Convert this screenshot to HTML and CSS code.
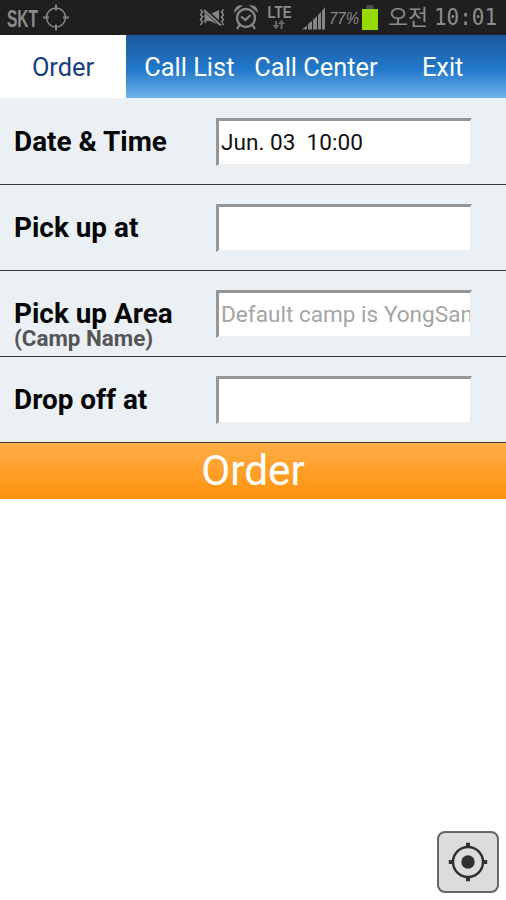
FILE: index.html
```
<!DOCTYPE html>
<html lang="en">
<head>
<meta charset="utf-8">
<meta name="viewport" content="width=device-width">
<title>Order</title>
<link rel="stylesheet" href="styles.css">
</head>
<body>
<header class="status">
<svg class="status-art" width="506" height="35" viewBox="0 0 506 35" fill="none" stroke="#858585">
<text class="carrier" x="7" y="27" textLength="31" lengthAdjust="spacingAndGlyphs">SKT</text>
<circle cx="56" cy="17.5" r="9.500" stroke-width="1.600"/>
<path d="M56 4.500v6M56 24.500v6M43 17.500h6M63 17.500h6" stroke-width="2"/>
<path d="M200.500 9.500l2 2.500-2 2.500 2 2.500-2 2.500 2 2.500-2 3M204.500 12l1.500 2-1.500 2 1.500 2-1.500 2 1.500 3M223.500 9.500l-2 2.500 2 2.500-2 2.500 2 2.500-2 2.500 2 3" stroke-width="1.600"/>
<path d="M206 14h4l9-4v15l-9-4h-4z" fill="#858585" stroke="none"/>
<path d="M205 10l16 15" stroke="#1f1f1f" stroke-width="4"/>
<path d="M204 10l17 15.500" stroke-width="2"/>
<circle cx="246" cy="18" r="9" stroke-width="2.4"/>
<path d="M241 16.500l4.500 3.500 5-5M239.500 25l-2.500 4M252.500 25l2.500 4" stroke-width="2.200"/>
<path d="M235 11q1-5 6-5zM257 11q-1-5-6-5z" fill="#858585" stroke-width="1.500"/>
<text class="lte" x="267.500" y="18" textLength="24" lengthAdjust="spacingAndGlyphs">LTE</text>
<path d="M276 21v7M281.500 29v-7" stroke="#666" stroke-width="2"/>
<path d="M272.500 25h7l-3.500 4.500zM278 24h7l-3.500-4.500z" fill="#666" stroke="none"/>
<path d="M302 29.500l5-4v4zM308 24l4-3v8.500h-4zM313 20l4-4v13.500h-4zM318 15l3-3v17.500h-3zM322 11l3-4v22.500h-3z" fill="#858585" stroke="none"/>
<text class="battery" x="329" y="24" textLength="30" lengthAdjust="spacingAndGlyphs">77%</text>
<path d="M366.500 5h7v4h-7z" fill="#4b4b50" stroke="none"/>
<path d="M362 9h16v21h-16z" fill="#94d900" stroke="none"/>
<text class="ampm" x="388" y="25" textLength="40" lengthAdjust="spacingAndGlyphs">오전</text>
<text class="clock" x="434" y="24.500" textLength="63" lengthAdjust="spacingAndGlyphs">10:01</text>
</svg>
</header>
<nav class="tabs">
<a class="tab active"><span>Order</span></a><a class="tab"><span>Call List</span></a><a class="tab"><span>Call Center</span></a><a class="tab"><span>Exit</span></a>
</nav>
<form class="form">
<div class="row"><label class="name">Date &amp; Time</label><input class="field" value="Jun. 03&nbsp; 10:00"></div>
<div class="row"><label class="name">Pick up at</label><input class="field"></div>
<div class="row"><label class="name">Pick up Area<small class="hint">(Camp Name)</small></label><input class="field" placeholder="Default camp is YongSan"></div>
<div class="row"><label class="name">Drop off at</label><input class="field"></div>
<button class="submit" type="button">Order</button>
</form>
<button class="locate" type="button" aria-label="Locate">
<svg width="40" height="40" viewBox="0 0 40 40" fill="none" stroke="#303030"><circle cx="20" cy="20" r="15" stroke-width="2.500"/><circle cx="20" cy="20" r="6.700" fill="#303030" stroke="none"/><path d="M20 .8v5M20 34.200v5M.8 20h5M34.200 20h5" stroke-width="4"/></svg>
</button>
</body>
</html>
```
FILE: styles.css
```
* { box-sizing: border-box; }
body { margin: 0; height: 900px; background: #fff; font-family: Roboto, "Liberation Sans", sans-serif; overflow: hidden; }
.status { height: 35px; background: #1f1f1f; }
.status-art { display: block; }
.status-art text { fill: #8c8c8c; stroke: none; }
.status-art .carrier { font: bold 24px "Liberation Sans", sans-serif; }
.status-art .lte { font: bold 16px "Liberation Sans", sans-serif; }
.status-art .battery { font: italic 17px "Liberation Sans", sans-serif; }
.status-art .ampm { font: 22px "Noto Sans CJK KR", sans-serif; }
.status-art .clock { font: 23px "DejaVu Sans Mono", monospace; }
.tabs { display: grid; grid-template-columns: 126px repeat(3, 1fr); height: 63px; background: linear-gradient(#1e58a0, #2179ca 55%, #70b2e8); }
.tab { display: flex; align-items: center; justify-content: center; color: #fff; font-size: 25.4px; white-space: nowrap; }
.active { background: #fff; color: #17407f; }
.form { margin: 0; }
.row { display: flex; align-items: center; height: 86px; padding: 0 34px 0 14px; background: #ebf0f5; border-bottom: 1px solid #3a3a3e; }
.row:first-child { height: 87px; padding-top: 2px; }
.name { position: relative; width: 202px; font-size: 27.9px; font-weight: 700; line-height: 26px; color: #060606; white-space: nowrap; }
.hint { position: absolute; left: 0; top: 26px; font-size: 22.4px; line-height: 22px; color: #555; }
.field { width: 256px; height: 48px; margin: 0; padding: 0 0 0 2px; border: 3px solid; border-width: 3px 2px 2px 3px; border-color: #969696 #eee #eee #969696; border-radius: 0; background: #fff; color: #111; font: 22.6px Roboto, sans-serif; outline: 0; }
.row:first-child .field { padding-bottom: 1px; }
.field::placeholder { color: #a5a5a5; }
.submit { display: block; width: 100%; height: 56px; padding: 0; border: 0; background: linear-gradient(#ffad48, #ff920c); color: #fff; font: 42.3px/56px Roboto, sans-serif; }
.locate { position: absolute; left: 437px; top: 831px; display: grid; place-items: center; width: 62px; height: 62px; padding: 0; border: 2px solid #666; border-radius: 8px; background: #dcdcdc; }
```
